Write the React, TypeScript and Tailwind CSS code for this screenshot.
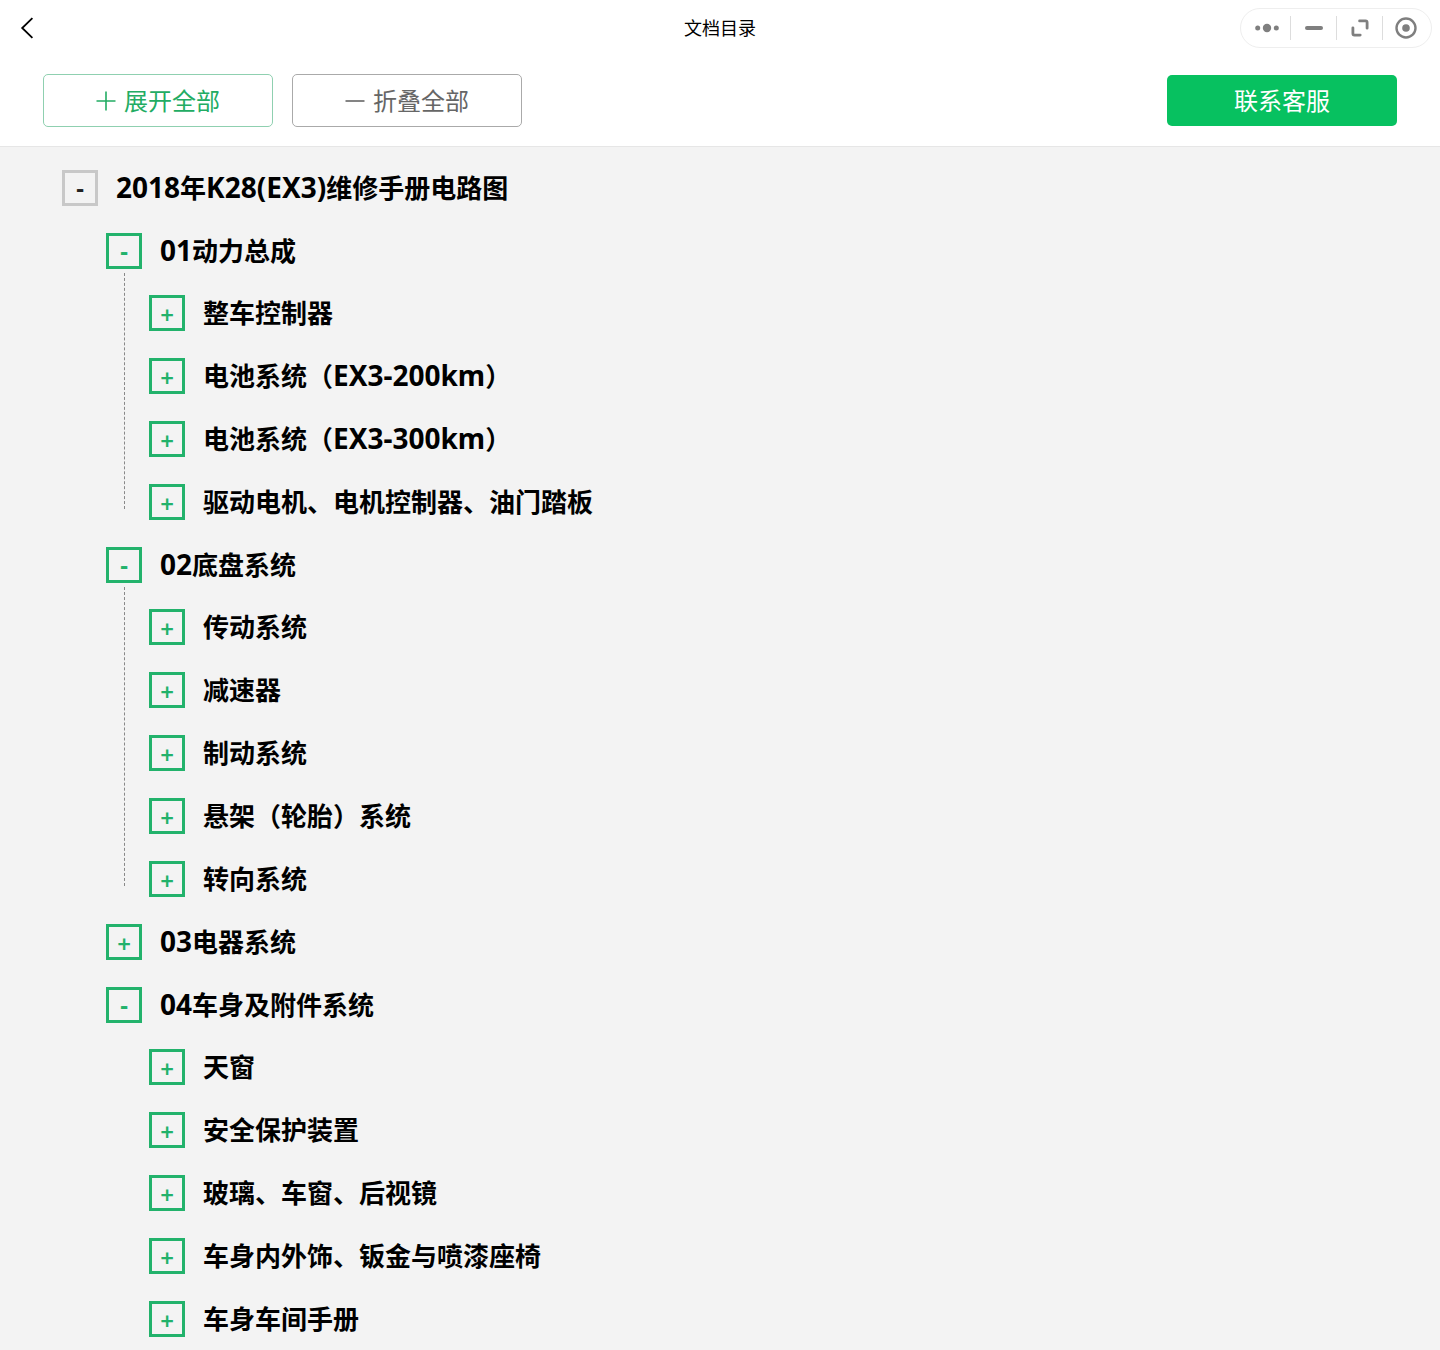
import React, { useState } from 'react';

type TreeNode = {
  id: string;
  title: string;
  guide?: boolean;
  children?: TreeNode[];
};

const sections: TreeNode[] = [
  {
    id: '01',
    title: '01动力总成',
    guide: true,
    children: [
      { id: '01-1', title: '整车控制器' },
      { id: '01-2', title: '电池系统（EX3-200km）' },
      { id: '01-3', title: '电池系统（EX3-300km）' },
      { id: '01-4', title: '驱动电机、电机控制器、油门踏板' },
    ],
  },
  {
    id: '02',
    title: '02底盘系统',
    guide: true,
    children: [
      { id: '02-1', title: '传动系统' },
      { id: '02-2', title: '减速器' },
      { id: '02-3', title: '制动系统' },
      { id: '02-4', title: '悬架（轮胎）系统' },
      { id: '02-5', title: '转向系统' },
    ],
  },
  { id: '03', title: '03电器系统' },
  {
    id: '04',
    title: '04车身及附件系统',
    children: [
      { id: '04-1', title: '天窗' },
      { id: '04-2', title: '安全保护装置' },
      { id: '04-3', title: '玻璃、车窗、后视镜' },
      { id: '04-4', title: '车身内外饰、钣金与喷漆座椅' },
      { id: '04-5', title: '车身车间手册' },
    ],
  },
];

const allOpen = ['root', '01', '02', '04'];

// Latin runs are set a little larger than the Chinese ones
const Title: React.FC<{ text: string }> = ({ text }) => (
  <>
    {text.split(/([\x20-\x7e]+)/).map((part, i) =>
      i % 2 === 1 ? (
        <span key={i} className="text-[28px]">
          {part}
        </span>
      ) : (
        part
      )
    )}
  </>
);

type RowProps = {
  title: string;
  open: boolean;
  root?: boolean;
  onToggle: () => void;
};

const Row: React.FC<RowProps> = ({ title, open, root, onToggle }) => (
  <div className="flex h-[63px] items-center gap-[18px]">
    <button
      type="button"
      aria-label={title}
      aria-expanded={open}
      onClick={onToggle}
      className={
        root
          ? 'flex size-9 shrink-0 items-center justify-center border-3 border-[#c8c8c8] text-[#222]'
          : 'flex size-9 shrink-0 items-center justify-center border-3 border-[#22b26b] text-[#22b26b]'
      }
    >
      {open ? (
        <span className="text-2xl leading-6 font-bold">-</span>
      ) : (
        <span className="pt-1 text-2xl leading-6 font-semibold">+</span>
      )}
    </button>
    <span className="text-[26px] leading-9 font-bold whitespace-nowrap text-black">
      <Title text={title} />
    </span>
  </div>
);

const Capsule: React.FC = () => (
  <div className="flex h-10 items-center rounded-full border border-[#eee] px-[3px] text-[#7f7f7f]">
    <button type="button" aria-label="更多" className="flex h-6 w-[46px] items-center justify-center">
      <svg width="24" height="10" viewBox="0 0 24 10" fill="currentColor">
        <circle cx="2.7" cy="5" r="2.5" />
        <circle cx="12" cy="5" r="4.2" />
        <circle cx="21.3" cy="5" r="2.5" />
      </svg>
    </button>
    <button
      type="button"
      aria-label="最小化"
      className="flex h-6 w-[46px] items-center justify-center border-l border-[#ddd]"
    >
      <svg width="18" height="4" viewBox="0 0 18 4" fill="currentColor">
        <rect width="18" height="4" rx="2" />
      </svg>
    </button>
    <button
      type="button"
      aria-label="最大化"
      className="flex h-6 w-[46px] items-center justify-center border-l border-[#ddd]"
    >
      <svg
        width="18"
        height="18"
        viewBox="0 0 18 18"
        fill="none"
        stroke="currentColor"
        strokeWidth="2.8"
        strokeLinecap="round"
      >
        <path d="M8.6 1.9H14.6Q16.1 1.9 16.1 3.4V9.2" />
        <path d="M1.9 8.8V14.6Q1.9 16.1 3.4 16.1H9.2" />
      </svg>
    </button>
    <button
      type="button"
      aria-label="关闭"
      className="flex h-6 w-[46px] items-center justify-center border-l border-[#ddd]"
    >
      <svg width="22" height="22" viewBox="0 0 22 22">
        <circle cx="11" cy="11" r="9.5" fill="none" stroke="currentColor" strokeWidth="2.4" />
        <circle cx="11" cy="11" r="3.8" fill="currentColor" />
      </svg>
    </button>
  </div>
);

const App: React.FC = () => {
  const [opened, setOpened] = useState<string[]>(allOpen);

  const toggle = (id: string) =>
    setOpened((prev) => (prev.includes(id) ? prev.filter((x) => x !== id) : [...prev, id]));

  return (
    <div className="flex min-h-screen flex-col overflow-x-hidden bg-[#f3f3f3] font-['Noto_Sans','Noto_Sans_CJK_SC',sans-serif]">
      <header className="border-b border-[#e6e6e6] bg-white">
        <div className="grid h-[55px] grid-cols-[1fr_auto_1fr] items-center px-2">
          <button type="button" aria-label="返回" className="ml-3 justify-self-start">
            <svg
              width="14"
              height="22"
              viewBox="0 0 14 22"
              fill="none"
              stroke="#000"
              strokeWidth="1.8"
            >
              <path d="M12.4 1.2L2.2 11L12.4 20.8" />
            </svg>
          </button>
          <h1 className="text-lg text-black">文档目录</h1>
          <div className="justify-self-end">
            <Capsule />
          </div>
        </div>

        <div className="flex items-center justify-between px-[43px] py-[19px]">
          <div className="flex gap-[19px]">
            <button
              type="button"
              onClick={() => setOpened(allOpen)}
              className="flex h-[53px] w-[230px] items-center justify-center gap-2 rounded-[5px] border border-[#8fd0b0] text-2xl text-[#22ac63]"
            >
              <svg width="20" height="20" viewBox="0 0 20 20" stroke="currentColor" strokeWidth="1.6">
                <path d="M0.5 10H19.5M10 0.5V19.5" />
              </svg>
              展开全部
            </button>
            <button
              type="button"
              onClick={() => setOpened([])}
              className="flex h-[53px] w-[230px] items-center justify-center gap-2 rounded-[5px] border border-[#aaa] text-2xl text-[#666]"
            >
              <svg width="20" height="20" viewBox="0 0 20 20" stroke="currentColor" strokeWidth="1.6">
                <path d="M0.5 10H19.5" />
              </svg>
              折叠全部
            </button>
          </div>
          <button
            type="button"
            className="h-[51px] w-[230px] rounded-[5px] bg-[#07c160] text-2xl text-white"
          >
            联系客服
          </button>
        </div>
      </header>

      <main className="pt-[9px] pl-[62px]">
        <Row
          root
          title="2018年K28(EX3)维修手册电路图"
          open={opened.includes('root')}
          onToggle={() => toggle('root')}
        />
        {opened.includes('root') && (
          <ul className="pl-11">
            {sections.map((section) => {
              const open = opened.includes(section.id);
              return (
                <li key={section.id}>
                  <Row title={section.title} open={open} onToggle={() => toggle(section.id)} />
                  {open && section.children && (
                    <div className="-mt-px flex gap-6 pl-[18px]">
                      <div
                        className={
                          section.guide
                            ? '-mt-2 mb-6 border-l border-dashed border-[#888]'
                            : 'border-l border-transparent'
                        }
                      />
                      <ul>
                        {section.children.map((item) => (
                          <li key={item.id}>
                            <Row
                              title={item.title}
                              open={opened.includes(item.id)}
                              onToggle={() => toggle(item.id)}
                            />
                          </li>
                        ))}
                      </ul>
                    </div>
                  )}
                </li>
              );
            })}
          </ul>
        )}
      </main>
    </div>
  );
};

export default App;
